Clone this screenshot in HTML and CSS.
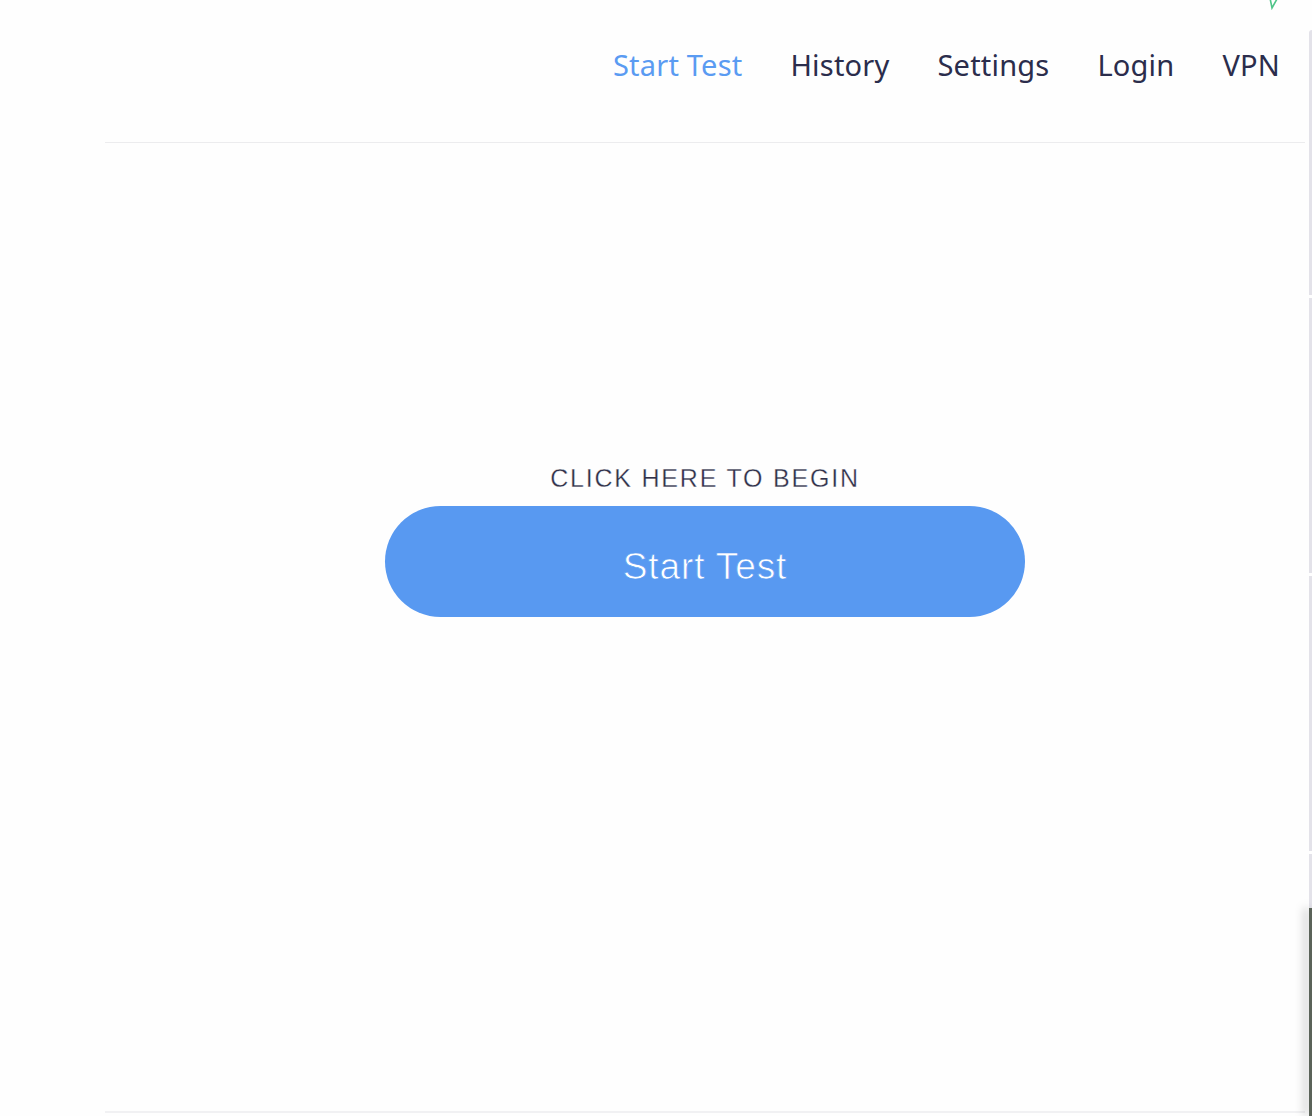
FILE: index.html
```html
<!DOCTYPE html>
<html>
<head>
<meta charset="utf-8">
<title>Speed Test</title>
<link rel="stylesheet" href="styles.css">
</head>
<body>
<div class="page">
	<div class="header">
		<ul class="nav">
			<li class="active"><a href="#">Start Test</a></li>
			<li><a href="#">History</a></li>
			<li><a href="#">Settings</a></li>
			<li><a href="#">Login</a></li>
			<li><a href="#">VPN</a></li>
		</ul>
	</div>
	<div class="main">
		<p class="hint">CLICK HERE TO BEGIN</p>
		<a class="start" href="#">Start Test</a>
	</div>
</div>
<svg class="tick" width="14" height="10" viewBox="0 0 14 10"><path d="M4 -2 L6 8 L11 -1" fill="none" stroke="#4fc488" stroke-width="1.6"/></svg>
<div class="edge">
	<span class="seg s1"></span>
	<span class="seg s2"></span>
	<span class="seg s3"></span>
	<span class="seg s4"></span>
</div>
<div class="dock"></div>
</body>
</html>
```

FILE: styles.css
```css
*{ margin:0; padding:0;}
html,body{ background:#fefefe; height:1116px; overflow:hidden;}
body{ position:relative; font-family:"Noto Sans", "Open Sans", sans-serif;}
.page{ padding:0 7px 0 105px; display:flex; flex-direction:column;}
.header{ height:142px; border-bottom:1px solid #ececee; display:flex; justify-content:flex-end; align-items:center;}
.nav{ list-style:none; display:flex; gap:48px; padding-right:25px; margin-top:-13px;}
.nav a{ text-decoration:none; color:#2b2d4c; font-size:29px; letter-spacing:0.2px;}
.nav .active a{ color:#5a9bf2;}
.main{ height:970px; border-bottom:2px solid #f1f1f3; display:flex; flex-direction:column; align-items:center; padding-top:320px; box-sizing:border-box;}
.hint{ font-family:"Liberation Sans", Arial, sans-serif; font-size:25px; line-height:30px; letter-spacing:1.8px; color:#2f3049; -webkit-text-stroke:0.3px #fefefe;}
.start{ display:flex; align-items:center; justify-content:center; box-sizing:border-box; padding-top:11px; margin-top:13px; width:640px; height:111px; border-radius:56px; background:#5899f1; color:#fff; text-decoration:none; font-family:"Liberation Sans", Arial, sans-serif; font-size:37px; letter-spacing:0.9px; -webkit-text-stroke:0.7px #5899f1;}
.tick{ position:absolute; left:1266px; top:0;}
.edge{ position:absolute; left:1309px; top:30px; width:3px; height:1086px; display:flex; flex-direction:column; gap:3px;}
.seg{ display:block; background:#e3e2e9;}
.s1{ height:265px; border-top-left-radius:3px;}
.s2{ height:275px;}
.s3{ height:275px;}
.s4{ flex:1;}
.dock{ position:absolute; left:1309px; top:908px; width:3px; height:208px; background:#5b6359; box-shadow:-4px 0 10px rgba(0,0,0,0.35);}
```
